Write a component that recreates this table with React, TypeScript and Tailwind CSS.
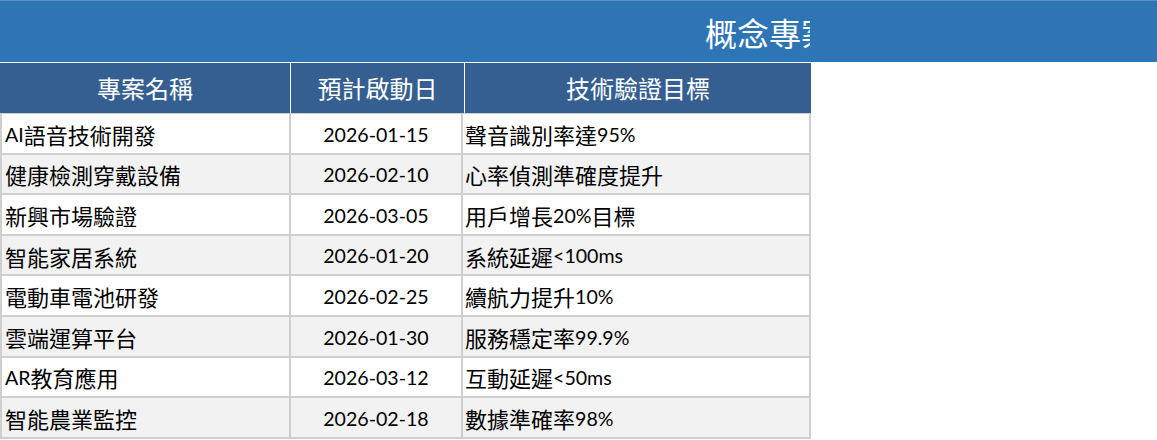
import React from 'react';

interface Row {
  name: string;
  date: string;
  goal: string;
}

const rows: Row[] = [
  { name: 'AI語音技術開發', date: '2026-01-15', goal: '聲音識別率達95%' },
  { name: '健康檢測穿戴設備', date: '2026-02-10', goal: '心率偵測準確度提升' },
  { name: '新興市場驗證', date: '2026-03-05', goal: '用戶增長20%目標' },
  { name: '智能家居系統', date: '2026-01-20', goal: '系統延遲<100ms' },
  { name: '電動車電池研發', date: '2026-02-25', goal: '續航力提升10%' },
  { name: '雲端運算平台', date: '2026-01-30', goal: '服務穩定率99.9%' },
  { name: 'AR教育應用', date: '2026-03-12', goal: '互動延遲<50ms' },
  { name: '智能農業監控', date: '2026-02-18', goal: '數據準確率98%' },
];

const cjk = "font-['Noto_Sans_CJK_TC',sans-serif]";
const latin = "font-['Lato','Noto_Sans_CJK_TC',sans-serif]";

const Mixed: React.FC<{ text: string }> = ({ text }) => (
  <>
    {text.split(/([\x20-\x7e]+)/).filter(Boolean).map((part, i) =>
      /^[\x20-\x7e]+$/.test(part) ? (
        <span key={i} className={`${latin} text-[19.6px]`}>{part}</span>
      ) : (
        <span key={i} className={`${cjk} text-[22px]`}>{part}</span>
      )
    )}
  </>
);

export default function App() {
  return (
    <div className="w-[1157px] h-[440px] bg-white overflow-hidden">
      {/* Title bar */}
      <div className="h-[62px] bg-[#2e75b6] border-t border-[#5a8fc6]">
        <div className="w-[810px] h-full overflow-hidden flex items-center">
          <h1 className={`${cjk} text-[32px] text-white whitespace-nowrap pl-[705px] leading-none`}>
            概念專案技術驗證時程表
          </h1>
        </div>
      </div>

      {/* Header */}
      <div className="w-[811px] border-t border-r border-white grid grid-cols-[290px_173px_346px] h-[52px] bg-white gap-x-[1px]">
        <div className={`${cjk} bg-[#365f91] text-white text-[24px] flex items-center justify-center h-[50px]`}>專案名稱</div>
        <div className={`${cjk} bg-[#365f91] text-white text-[24px] flex items-center justify-center h-[50px]`}>預計啟動日</div>
        <div className={`${cjk} bg-[#365f91] text-white text-[24px] flex items-center justify-center h-[50px]`}>技術驗證目標</div>
      </div>

      {/* Data rows */}
      <div className="w-[811px] border-l-2 border-r-2 border-t-2 border-[#cfcfcf] -mt-[2px]">
        {rows.map((row, index) => (
          <div
            key={row.name}
            className={`grid grid-cols-[289px_172px_346px] h-[40.6px] border-b-2 border-[#cfcfcf] ${index % 2 === 1 ? 'bg-[#f2f2f2]' : 'bg-white'}`}
          >
            <div className="flex items-center pl-[3px] pt-[2px] border-r-2 border-[#cfcfcf] text-black whitespace-nowrap">
              <Mixed text={row.name} />
            </div>
            <div className={`${latin} flex items-center justify-center pt-[2px] border-r-2 border-[#cfcfcf] text-[19.6px] text-black`}>
              {row.date}
            </div>
            <div className="flex items-center pl-[2px] pt-[2px] text-black whitespace-nowrap">
              <Mixed text={row.goal} />
            </div>
          </div>
        ))}
      </div>
    </div>
  );
}
